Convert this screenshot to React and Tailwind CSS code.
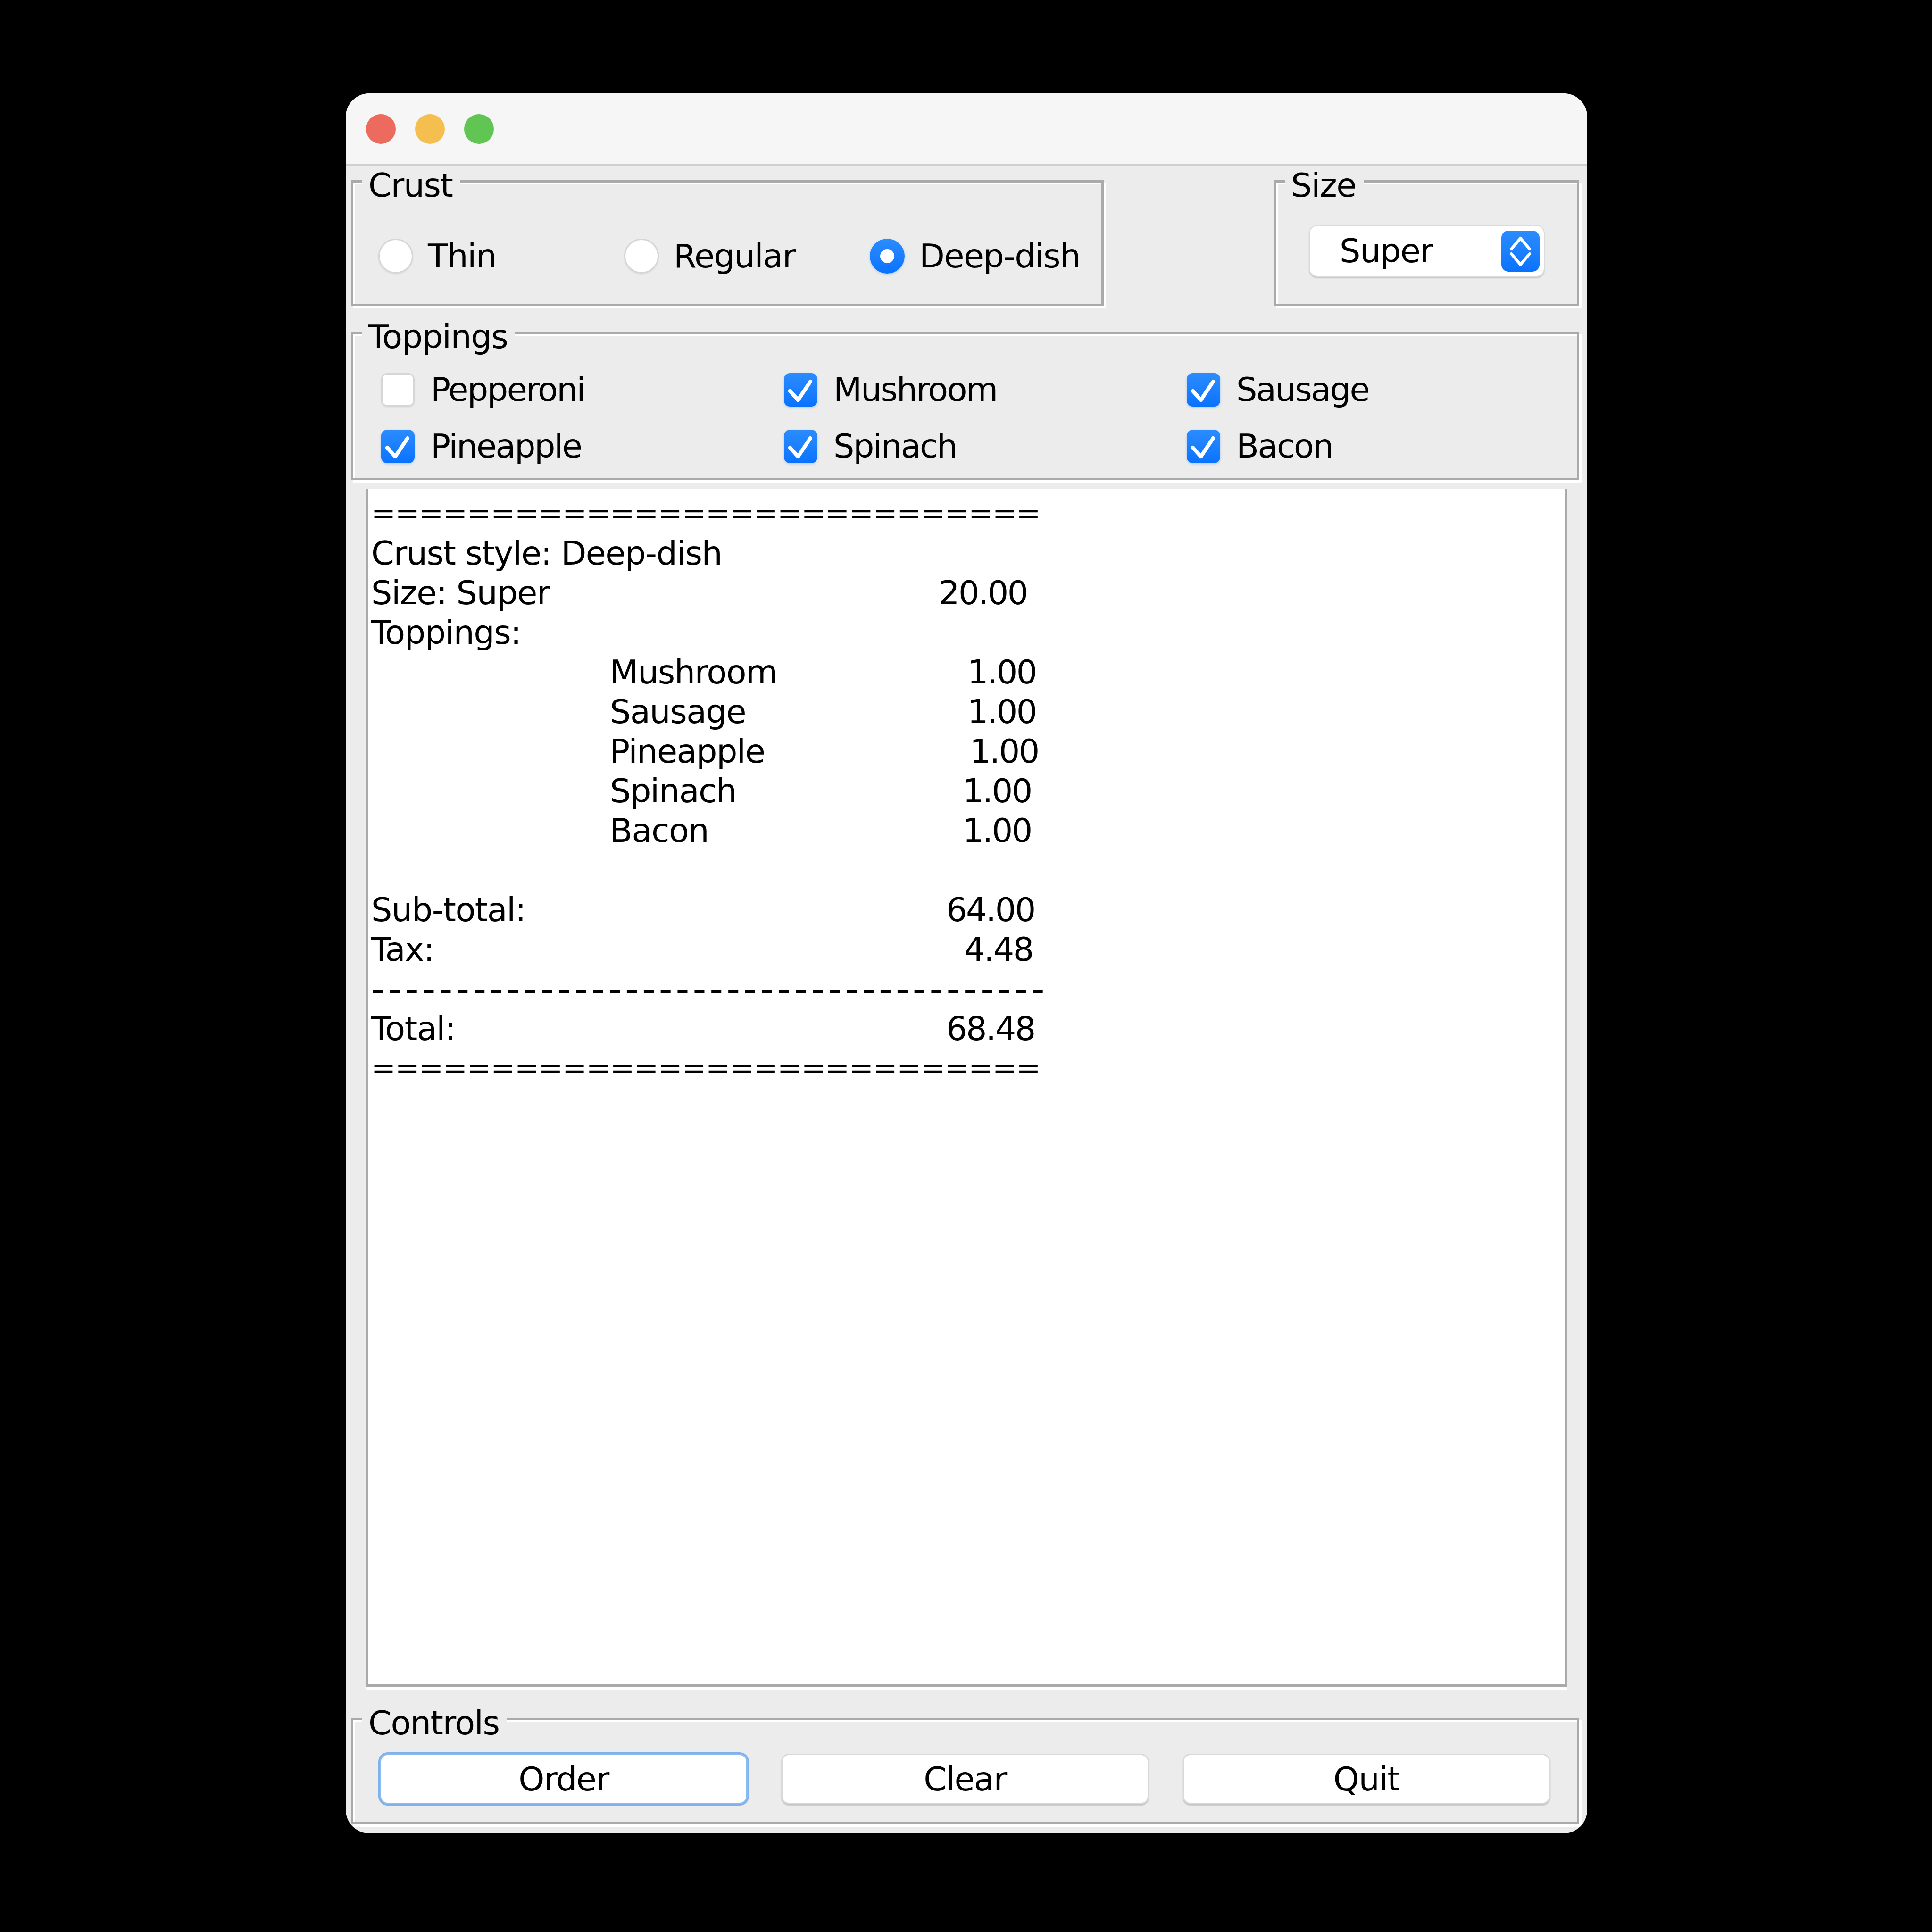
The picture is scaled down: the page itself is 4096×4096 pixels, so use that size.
import React from 'react';

const RECEIPT = [
  { text: '============================', kind: 'eq' },
  { text: 'Crust style: Deep-dish' },
  { text: 'Size: Super', num: '20.00', w: 'w-[1203px]' },
  { text: 'Toppings:' },
  { text: 'Mushroom', num: '1.00', w: 'w-[758px]', indent: true },
  { text: 'Sausage', num: '1.00', w: 'w-[758px]', indent: true },
  { text: 'Pineapple', num: '1.00', w: 'w-[763px]', indent: true },
  { text: 'Spinach', num: '1.00', w: 'w-[748px]', indent: true },
  { text: 'Bacon', num: '1.00', w: 'w-[748px]', indent: true },
  { text: '' },
  { text: 'Sub-total:', num: '64.00', w: 'w-[1219px]' },
  { text: 'Tax:', num: '4.48', w: 'w-[1257px]' },
  { text: '----------------------------------------', kind: 'dash' },
  { text: 'Total:', num: '68.48', w: 'w-[1219px]' },
  { text: '============================', kind: 'eq' },
];

const TOPPINGS = [
  { label: 'Pepperoni', checked: false },
  { label: 'Mushroom', checked: true },
  { label: 'Sausage', checked: true },
  { label: 'Pineapple', checked: true },
  { label: 'Spinach', checked: true },
  { label: 'Bacon', checked: true },
];

function Group({ title, className = '', children }) {
  return (
    <div
      className={`relative shrink-0 border-[5px] border-[#aaaaaa] shadow-[inset_4px_4px_0_#ffffff,5px_5px_0_#ffffff] ${className}`}
    >
      <div className="absolute top-[-29px] left-[19px] whitespace-nowrap bg-[#ececec] pl-[13px] pr-[16px] text-[70px] leading-[70px]">
        {title}
      </div>
      {children}
    </div>
  );
}

function Radio({ label, checked }) {
  return (
    <div className="flex w-[521px] shrink-0 items-center gap-[31px]">
      {checked ? (
        <div className="flex size-[74px] shrink-0 items-center justify-center rounded-full bg-linear-to-b from-[#2b8cff] to-[#0872fe] shadow-[0_2px_5px_rgba(10,116,255,0.25)]">
          <div className="size-[30px] rounded-full bg-white" />
        </div>
      ) : (
        <div className="size-[74px] shrink-0 rounded-full border-[3px] border-[#d6d6d6] bg-white shadow-[0_2px_3px_rgba(0,0,0,0.06)]" />
      )}
      <span className="whitespace-nowrap leading-[74px]">{label}</span>
    </div>
  );
}

function Checkbox({ label, checked }) {
  return (
    <div className="flex h-[72px] items-center gap-[34px]">
      {checked ? (
        <div className="flex size-[71px] shrink-0 items-center justify-center rounded-[13px] bg-linear-to-b from-[#2b8cff] to-[#0872fe] shadow-[0_2px_5px_rgba(10,116,255,0.25)]">
          <svg width="71" height="71" viewBox="0 0 71 71" fill="none">
            <path
              d="M13 38 L30 57 L56 18"
              stroke="#ffffff"
              strokeWidth="8"
              strokeLinecap="round"
              strokeLinejoin="round"
            />
          </svg>
        </div>
      ) : (
        <div className="size-[71px] shrink-0 rounded-[13px] border-[3px] border-[#d6d6d6] bg-white shadow-[0_2px_3px_rgba(0,0,0,0.06)]" />
      )}
      <span className="leading-[72px] tracking-[-2.5px]">{label}</span>
    </div>
  );
}

function Button({ label, focused }) {
  return (
    <div
      className={`flex h-[107px] w-[780px] items-center justify-center rounded-[17px] bg-white leading-[70px] ${
        focused
          ? 'border-[3px] border-[#8dbbf0] ring-[3px] ring-[#7fb1ee]'
          : 'border-[3px] border-[#d9d9d9] shadow-[0_3px_2px_rgba(0,0,0,0.16)]'
      }`}
    >
      {label}
    </div>
  );
}

export default function App() {
  return (
    <div className="h-[4096px] w-[4096px] bg-black pl-[733px] pt-[198px] font-['DejaVu_Sans','Liberation_Sans',sans-serif] text-[70px] tracking-[-1.5px] text-black">
      <div className="flex h-[3689px] w-[2632px] flex-col overflow-hidden rounded-[50px] bg-[#ececec]">
        {/* title bar */}
        <div className="flex h-[153px] shrink-0 items-center gap-[41px] border-b-[3px] border-[#cfcfcf] bg-[#f6f6f6] pl-[43px]">
          <div className="size-[63px] rounded-full bg-[#ed6a5e]" />
          <div className="size-[63px] rounded-full bg-[#f5bf4f]" />
          <div className="size-[63px] rounded-full bg-[#61c554]" />
        </div>

        {/* crust + size */}
        <div className="mt-[31px] flex justify-between pl-[11px] pr-[17px]">
          <Group title="Crust" className="h-[267px] w-[1596px]">
            <div className="flex pl-[53px] pt-[119px]">
              <Radio label="Thin" />
              <Radio label="Regular" />
              <Radio label="Deep-dish" checked />
            </div>
          </Group>
          <Group title="Size" className="h-[267px] w-[648px]">
            <div className="ml-[70px] mt-[90px] flex h-[110px] w-[500px] items-center justify-between rounded-[18px] border-[2px] border-[#dcdcdc] bg-white pl-[63px] pr-[9px] shadow-[0_3px_2px_rgba(0,0,0,0.14)]">
              <span className="leading-[70px]">Super</span>
              <div className="flex h-[87px] w-[81px] items-center justify-center rounded-[15px] bg-linear-to-b from-[#2b8cff] to-[#0872fe]">
                <svg width="81" height="87" viewBox="0 0 81 87" fill="none">
                  <path
                    d="M21 39 L40.5 16 L60 39 M21 49 L40.5 72 L60 49"
                    stroke="#ffffff"
                    strokeWidth="6"
                    strokeLinecap="round"
                    strokeLinejoin="round"
                  />
                </svg>
              </div>
            </div>
          </Group>
        </div>

        {/* toppings */}
        <Group title="Toppings" className="ml-[11px] mt-[54px] h-[315px] w-[2604px]">
          <div className="grid grid-cols-[repeat(3,854px)] gap-y-[48px] pl-[59px] pt-[82px]">
            {TOPPINGS.map((t) => (
              <Checkbox key={t.label} label={t.label} checked={t.checked} />
            ))}
          </div>
        </Group>

        {/* receipt */}
        <div className="ml-[43px] mt-[19px] h-[2540px] w-[2547px] shrink-0 border-b-[6px] border-l-[4px] border-r-[5px] border-[#aaaaaa] bg-white pl-[7px] pt-[10px] leading-[84px] shadow-[0_5px_0_#ffffff]">
          {RECEIPT.map((r, i) => (
            <div
              key={i}
              className={`flex h-[84px] whitespace-pre ${r.indent ? 'pl-[506px]' : ''} ${
                r.kind === 'eq'
                  ? 'text-[62px] tracking-[-1.3px]'
                  : r.kind === 'dash'
                  ? 'text-[80px] tracking-[7px]'
                  : ''
              }`}
            >
              <span className={`shrink-0 ${r.w || ''}`}>{r.text}</span>
              {r.num && <span className="tracking-[-2.5px]">{r.num}</span>}
            </div>
          ))}
        </div>

        {/* controls */}
        <Group title="Controls" className="ml-[11px] mt-[65px] h-[226px] w-[2604px]">
          <div className="flex gap-[71px] pl-[56px] pt-[71px]">
            <Button label="Order" focused />
            <Button label="Clear" />
            <Button label="Quit" />
          </div>
        </Group>
      </div>
    </div>
  );
}
